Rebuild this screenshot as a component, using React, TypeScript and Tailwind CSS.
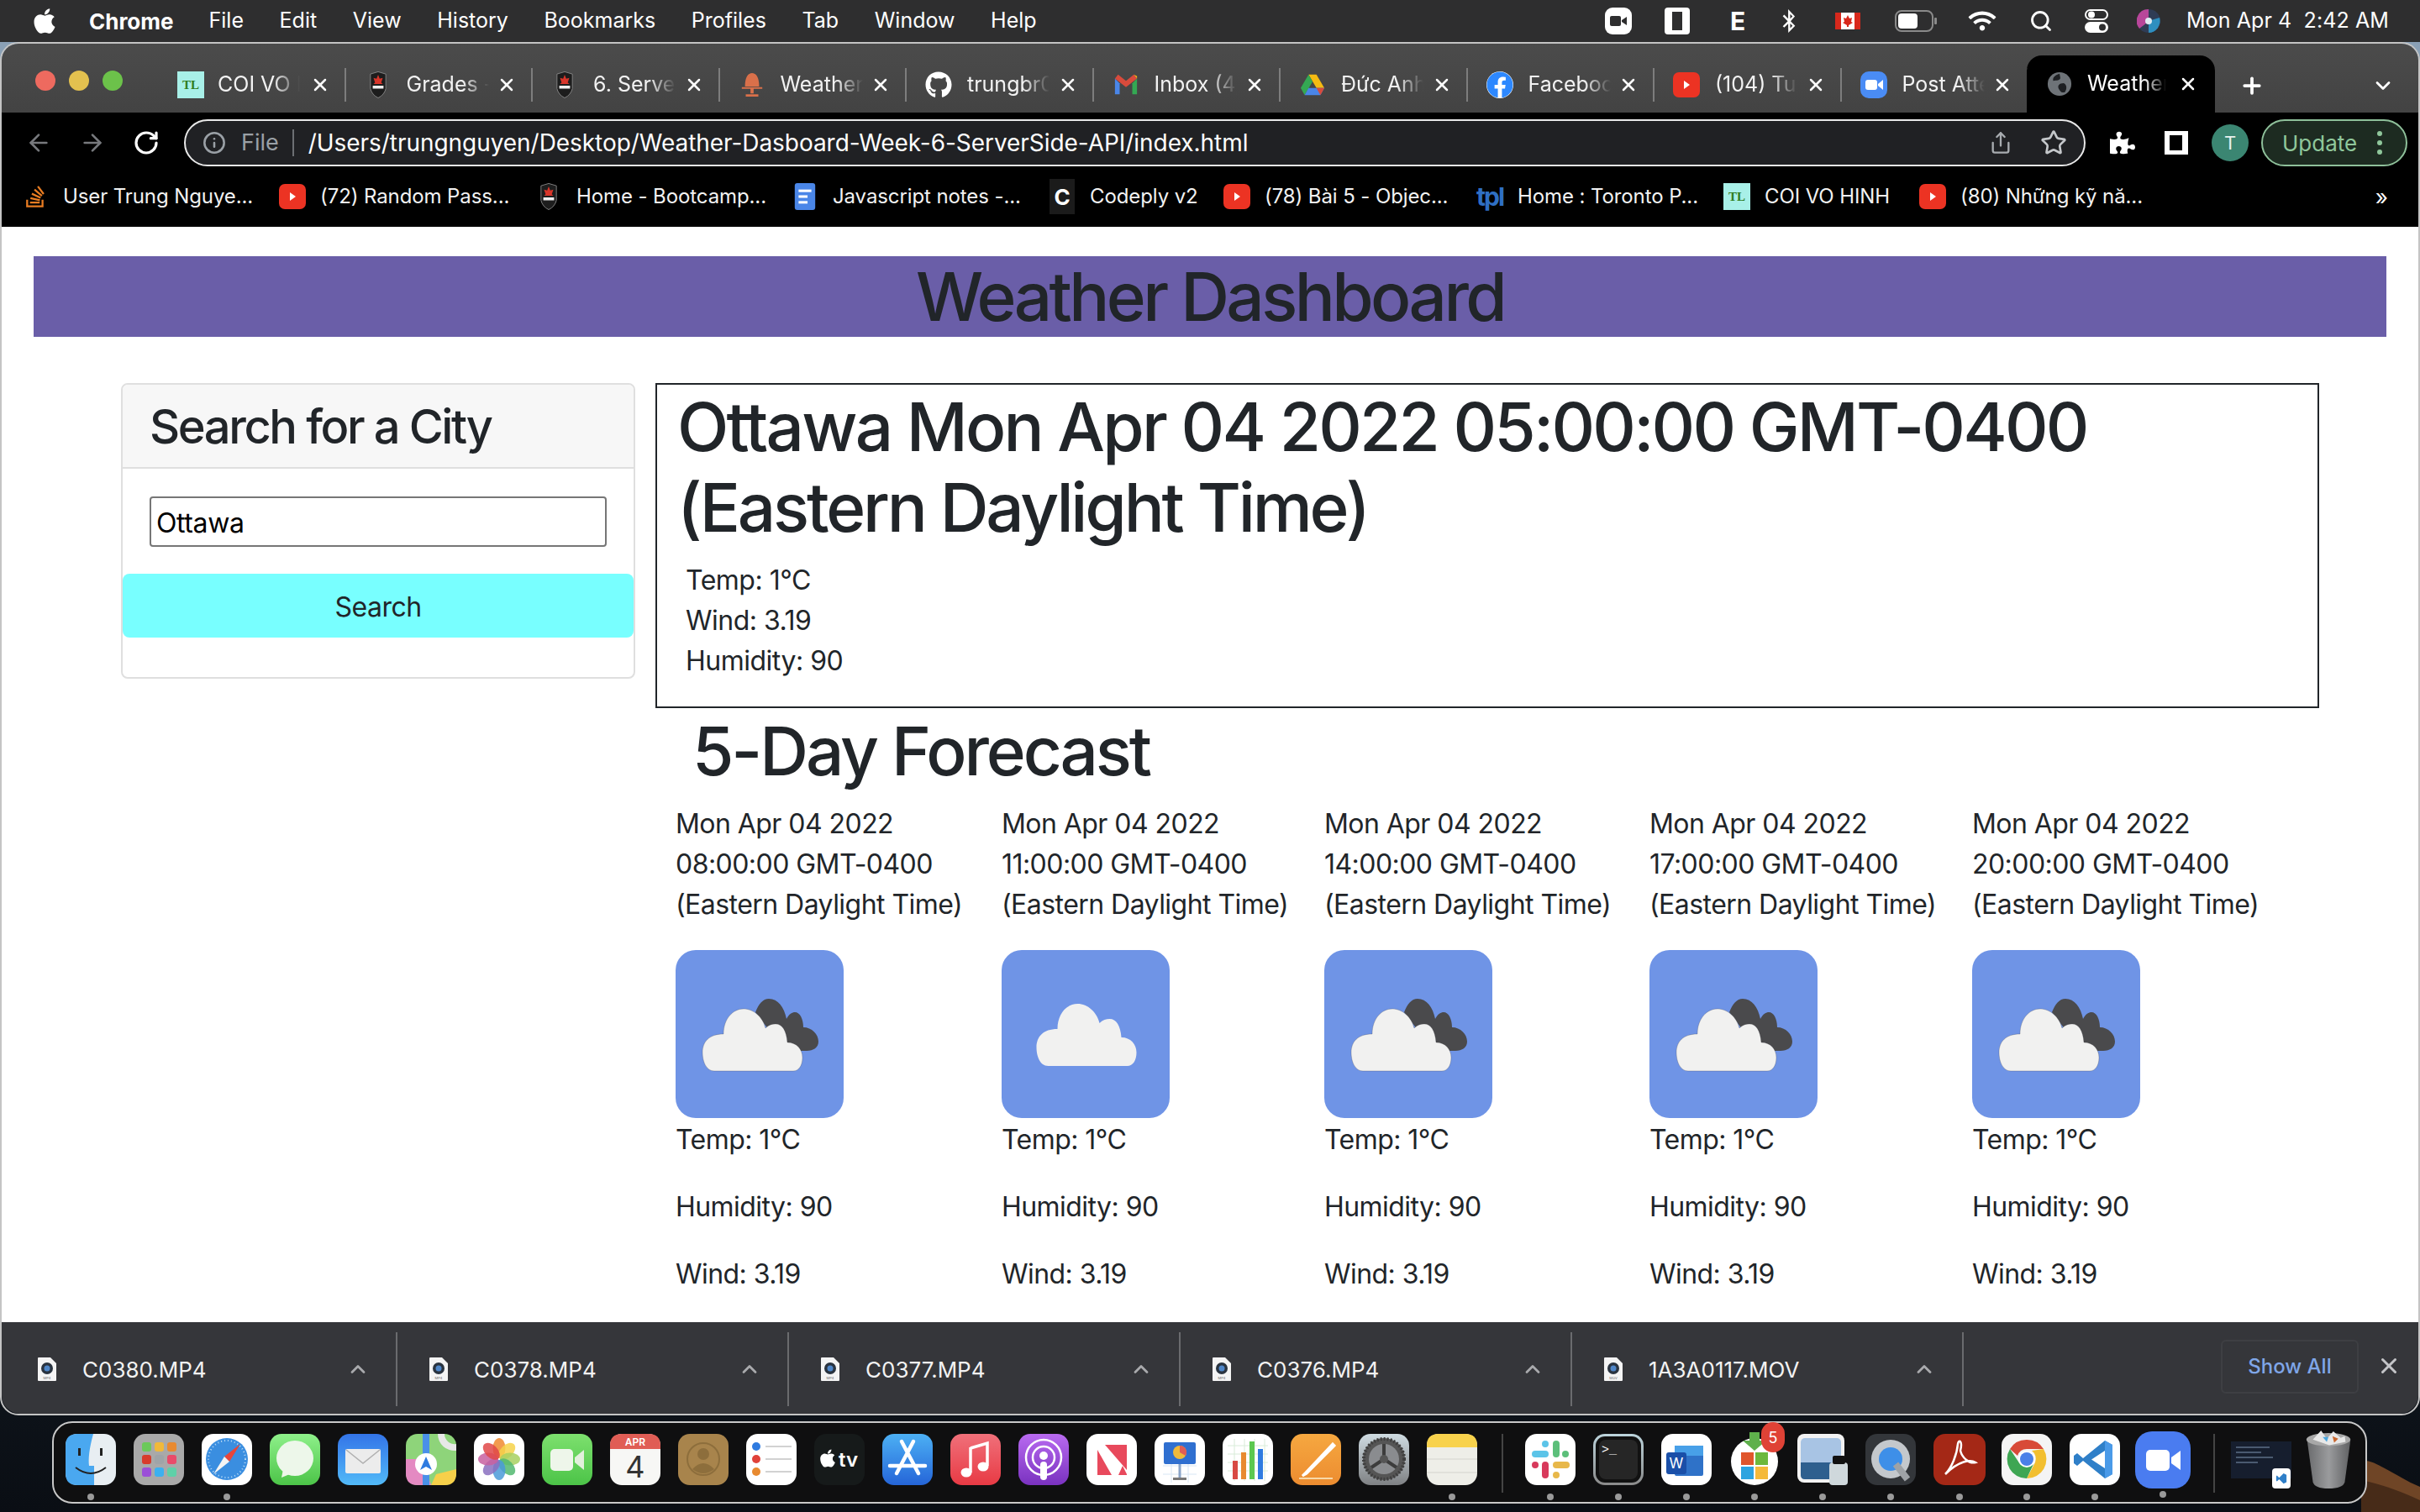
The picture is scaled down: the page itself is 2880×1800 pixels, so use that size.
import { ReactNode } from "react";
import { ArrowLeft, ArrowRight, ChevronDown, ChevronUp, Info, Plus, RotateCw, Search, Share, Star, X } from "lucide-react";
import { FaApple, FaBluetoothB, FaFacebook, FaGithub, FaPuzzlePiece, FaStackOverflow, FaWifi } from "react-icons/fa";

function TlIcon() {
  return (
    <div className="w-[32px] h-[32px] bg-[#a8f0e8] flex items-center justify-center text-[15px] font-bold text-[#2f7d1e] font-['Liberation_Serif',serif] shrink-0">
      TL
    </div>
  );
}

function Crest() {
  return (
    <svg viewBox="0 0 24 34" className="w-[22px] h-[32px] shrink-0">
      <path d="M2 3 L12 0 L22 3 L22 22 Q20 30 12 34 Q4 30 2 22 Z" fill="#1d1d1d" stroke="#888" strokeWidth="1" />
      <path d="M12 4 L14 9 L18 8 L16 14 L18 16 L6 16 L8 14 L6 8 L10 9 Z" fill="#d8352a" />
      <path d="M5 18 L19 18 L19 22 L5 22 Z" fill="#eee" />
    </svg>
  );
}

function Youtube() {
  return (
    <svg viewBox="0 0 32 32" className="w-[32px] h-[32px] shrink-0">
      <rect y="1" width="32" height="30" rx="7" fill="#ec3323" />
      <path d="M13 11 L20 16 L13 21 Z" fill="#fff" />
    </svg>
  );
}

function WeatherFav() {
  return (
    <svg viewBox="0 0 32 32" className="w-[30px] h-[32px] shrink-0">
      <path d="M7 18 C7 6 11 1 16 1 C21 1 25 6 25 18 Z" fill="#d9704a" />
      <path d="M3 19 H29 V21 H3 Z M14 21 H18 V27 H14 Z M8 28 H24 V31 H8 Z" fill="#d9704a" />
    </svg>
  );
}

function Gmail() {
  return (
    <svg viewBox="0 0 32 28" className="w-[30px] h-[28px] shrink-0">
      <path d="M2 6 V26 H8 V12 Z" fill="#4a86e8" />
      <path d="M24 12 V26 H30 V6 Z" fill="#34a853" />
      <path d="M2 6 L16 17 L30 6 L26 1 L16 9 L6 1 Z" fill="#d84b3c" />
      <path d="M26 1 L30 6 L30 3 Z" fill="#f5bb12" />
    </svg>
  );
}

function Drive() {
  return (
    <svg viewBox="0 0 32 28" className="w-[30px] h-[28px] shrink-0">
      <path d="M11 1 H21 L31 18 H21 Z" fill="#f5bb12" />
      <path d="M11 1 L1 18 L6 27 L16 10 Z" fill="#34a853" />
      <path d="M6 27 H26 L31 18 H11 Z" fill="#4a86e8" />
      <path d="M21 18 H31 L26 27 Z" fill="#d84b3c" />
    </svg>
  );
}

function ZoomFav() {
  return (
    <svg viewBox="0 0 32 32" className="w-[32px] h-[32px] shrink-0">
      <rect width="32" height="32" rx="10" fill="#4a8cf5" />
      <rect x="6" y="10" width="14" height="12" rx="3" fill="#fff" />
      <path d="M21 15 L27 10 V22 L21 17 Z" fill="#fff" />
    </svg>
  );
}

function Globe() {
  return (
    <svg viewBox="0 0 32 32" className="w-[30px] h-[32px] shrink-0">
      <circle cx="16" cy="16" r="15" fill="#6e7378" />
      <path d="M16 3 C10 5 7 8 8 12 C12 11 17 12 17 8 Z M21 15 C16 15 13 18 15 22 C17 26 20 28 23 26 C26 22 25 16 21 15 Z" fill="#1d1f22" />
    </svg>
  );
}

function DocFav() {
  return (
    <svg viewBox="0 0 32 42" className="w-[32px] h-[32px] shrink-0">
      <rect width="32" height="42" rx="4" fill="#4a86e8" />
      <rect x="6" y="10" width="20" height="4" fill="#fff" />
      <rect x="6" y="19" width="14" height="4" fill="#fff" />
      <rect x="6" y="28" width="14" height="4" fill="#fff" />
    </svg>
  );
}

const tabs: { icon: ReactNode; title: string }[] = [
  { icon: <TlIcon />, title: "COI VO H" },
  { icon: <Crest />, title: "Grades -" },
  { icon: <Crest />, title: "6. Server" },
  { icon: <WeatherFav />, title: "Weather" },
  { icon: <FaGithub className="w-[32px] h-[32px] text-white shrink-0" />, title: "trungbr0" },
  { icon: <Gmail />, title: "Inbox (4," },
  { icon: <Drive />, title: "Đức Anh" },
  { icon: <FaFacebook className="w-[32px] h-[32px] text-[#2d88ff] bg-white rounded-full shrink-0" />, title: "Facebook" },
  { icon: <Youtube />, title: "(104) Tu" },
  { icon: <ZoomFav />, title: "Post Atte" },
];

const bookmarks: { icon: ReactNode; title: string; width: string }[] = [
  { icon: <FaStackOverflow className="w-[22px] h-[34px] text-[#e87c22] shrink-0" />, title: "User Trung Nguye...", width: "w-[223px]" },
  { icon: <Youtube />, title: "(72) Random Pass...", width: "w-[222px]" },
  { icon: <Crest />, title: "Home - Bootcamp...", width: "w-[222px]" },
  { icon: <DocFav />, title: "Javascript notes -...", width: "w-[223px]" },
  {
    icon: (
      <div className="w-[30px] h-[42px] bg-[#1b1b1b] text-white text-[26px] font-bold flex items-center justify-center shrink-0">C</div>
    ),
    title: "Codeply v2",
    width: "w-[125px]",
  },
  { icon: <Youtube />, title: "(78) Bài 5 - Objec...", width: "w-[218px]" },
  {
    icon: <div className="w-[32px] text-[#2f6fc4] text-[30px] font-bold tracking-[-2px] leading-none shrink-0">tpl</div>,
    title: "Home : Toronto P...",
    width: "w-[211px]",
  },
  { icon: <TlIcon />, title: "COI VO HINH", width: "w-[150px]" },
  { icon: <Youtube />, title: "(80) Những kỹ nă...", width: "w-[216px]" },
];

const forecast = [
  { time: "08:00:00", dark: true, width: "w-[388px]" },
  { time: "11:00:00", dark: false, width: "w-[384px]" },
  { time: "14:00:00", dark: true, width: "w-[387px]" },
  { time: "17:00:00", dark: true, width: "w-[384px]" },
  { time: "20:00:00", dark: true, width: "w-[400px]" },
];

const downloads = ["C0380.MP4", "C0378.MP4", "C0377.MP4", "C0376.MP4", "1A3A0117.MOV"];

const cloudPath =
  "M46 144 C36 144 32 132 32 122 C32 109 40 100 57 100 C57 82 68 70 81 70 C93 70 104 80 107 93 C111 89 115 88 119 88 C127 88 132 96 133 110 C144 110 151 118 151 128 C151 137 147 144 140 144 Z";

function WeatherIcon({ dark }: { dark: boolean }) {
  return (
    <svg viewBox="0 0 200 200" className="w-[200px] h-[200px] block">
      <rect width="200" height="200" rx="24" fill="#6f94e6" />
      {dark ? (
        <>
          <path
            d="M95 74 C99 64 104 58 111 58 C122 58 129 68 132 82 C135 76 139 74 142 74 C148 74 152 82 152 92 C162 92 170 100 170 109 C170 116 164 120 156 120 L130 120 Z"
            fill="#4a4a4c"
          />
          <path d={cloudPath} fill="#f1f1f0" stroke="#33333a" strokeOpacity="0.25" strokeWidth="1" />
        </>
      ) : (
        <path d={cloudPath} fill="#f1f1f0" transform="translate(9.5 -6)" />
      )}
    </svg>
  );
}

function MenuBar() {
  const items = ["File", "Edit", "View", "History", "Bookmarks", "Profiles", "Tab", "Window", "Help"];
  return (
    <div className="h-[50px] bg-[#2e2e2f] flex items-center text-white text-[25px] shrink-0">
      <FaApple className="w-[30px] h-[34px] ml-[38px] mr-[38px] text-white" />
      <span className="font-bold text-[26px] mr-[42px]">Chrome</span>
      <div className="flex gap-[42.6px]">
        {items.map((m) => (
          <span key={m}>{m}</span>
        ))}
      </div>
      <div className="ml-auto flex items-center mr-[37px]">
        <svg viewBox="0 0 32 32" className="w-[32px] h-[32px]">
          <rect width="32" height="32" rx="9" fill="#fff" />
          <rect x="6" y="10" width="13" height="12" rx="2" fill="#2e2e2f" />
          <path d="M20 15 L26 11 V21 L20 17 Z" fill="#2e2e2f" />
        </svg>
        <svg viewBox="0 0 30 32" className="w-[30px] h-[32px] ml-[39px]">
          <rect width="30" height="32" rx="4" fill="#fff" />
          <rect x="9" y="5" width="12" height="22" fill="#2e2e2f" />
        </svg>
        <span className="ml-[48px] w-[17px] font-bold text-[30px] leading-none">E</span>
        <FaBluetoothB className="ml-[44px] w-[18px] h-[28px] text-white" />
        <svg viewBox="0 0 30 20" className="ml-[46px] w-[30px] h-[20px]">
          <rect width="30" height="20" fill="#fff" />
          <rect width="7" height="20" fill="#d8281c" />
          <rect x="23" width="7" height="20" fill="#d8281c" />
          <path d="M15 3 L17 7 L20 6 L19 11 L21 12 L16 15 V17 H14 V15 L9 12 L11 11 L10 6 L13 7 Z" fill="#d8281c" />
        </svg>
        <svg viewBox="0 0 50 26" className="ml-[41px] w-[50px] h-[26px]">
          <rect x="1" y="1" width="44" height="24" rx="7" fill="none" stroke="#8a8a8a" strokeWidth="2" />
          <rect x="4" y="4" width="23" height="18" rx="4" fill="#fff" />
          <rect x="47" y="9" width="3" height="8" rx="1" fill="#8a8a8a" />
        </svg>
        <FaWifi className="ml-[37px] w-[34px] h-[26px] text-white" />
        <Search className="ml-[39px] w-[28px] h-[30px] text-white" strokeWidth={2.4} />
        <svg viewBox="0 0 30 30" className="ml-[37px] w-[30px] h-[30px]">
          <rect x="2" y="2" width="26" height="11" rx="5.5" fill="none" stroke="#fff" strokeWidth="2" />
          <circle cx="9" cy="7.5" r="4" fill="#fff" />
          <rect x="1" y="16" width="28" height="13" rx="6.5" fill="#fff" />
          <circle cx="22" cy="22.5" r="4" fill="#2e2e2f" />
        </svg>
        <svg viewBox="0 0 28 28" className="ml-[33px] w-[28px] h-[28px]">
          <circle cx="14" cy="14" r="14" fill="#2f3c55" />
          <path d="M14 0 A14 14 0 0 0 3 23 Q10 18 14 14 Z" fill="#b8469a" />
          <path d="M14 28 A14 14 0 0 0 27 10 Q20 12 14 14 Z" fill="#2e8fc0" />
          <circle cx="14" cy="14" r="4" fill="#dfeaf2" />
        </svg>
        <span className="ml-[31px] whitespace-pre tracking-[0.1px]">Mon Apr 4  2:42 AM</span>
      </div>
    </div>
  );
}

function TabStrip() {
  return (
    <div className="h-[82px] bg-[linear-gradient(180deg,#4b4b4b,#434343)] flex items-stretch shrink-0 relative">
      <div className="w-[187px] flex items-center gap-[16px] pl-[40px] pt-[6px] shrink-0">
        <span className="w-[24px] h-[24px] rounded-full bg-[#ee6a5f]" />
        <span className="w-[24px] h-[24px] rounded-full bg-[#e3c14f]" />
        <span className="w-[24px] h-[24px] rounded-full bg-[#6cc24a]" />
      </div>
      {tabs.map((t, i) => (
        <div key={t.title} className="w-[222.5px] shrink-0 flex items-center pt-[16px] pl-[22px] first:pl-[21px] relative">
          <div className="w-[32px] flex justify-center shrink-0">{t.icon}</div>
          <span
            className={`${i === 0 ? "ml-[16px]" : "ml-[18px]"} w-[98px] overflow-hidden whitespace-nowrap text-[25px] text-[#f2f2f2] [mask-image:linear-gradient(90deg,#000_68%,transparent)]`}
          >
            {t.title}
          </span>
          <X className="w-[24px] h-[24px] ml-auto mr-[19px] text-white shrink-0" strokeWidth={2.5} />
          <span className="absolute right-0 top-[29px] h-[40px] w-[2px] bg-[#7d7d7d]" />
        </div>
      ))}
      <div className="w-[224px] ml-[-2px] shrink-0 mt-[14px] bg-black rounded-t-[18px] flex items-center pl-[24px] relative">
        <Globe />
        <span className="ml-[18px] w-[94px] overflow-hidden whitespace-nowrap text-[25px] text-white [mask-image:linear-gradient(90deg,#000_72%,transparent)]">
          Weather
        </span>
        <X className="w-[24px] h-[24px] ml-[14px] text-white shrink-0" strokeWidth={2.5} />
      </div>
      <Plus className="w-[30px] h-[30px] ml-[29px] self-center mt-[18px] text-white" strokeWidth={3} />
      <ChevronDown className="w-[28px] h-[28px] ml-[127px] self-center mt-[18px] text-white" strokeWidth={2.4} />
    </div>
  );
}

function Toolbar() {
  return (
    <div className="h-[72px] bg-black flex items-center shrink-0 pl-[28px]">
      <ArrowLeft className="w-[32px] h-[32px] text-[#77797d]" strokeWidth={2} />
      <ArrowRight className="w-[32px] h-[32px] ml-[32px] text-[#77797d]" strokeWidth={2} />
      <RotateCw className="w-[32px] h-[32px] ml-[32px] text-white" strokeWidth={2.4} />
      <div className="ml-[29px] w-[2263px] h-[56px] rounded-full border-2 border-[#e8e8e8] bg-[#202124] flex items-center pl-[20px] shrink-0">
        <Info className="w-[28px] h-[28px] text-[#9aa0a6]" strokeWidth={2.2} />
        <span className="ml-[18px] text-[27px] text-[#9aa0a6]">File</span>
        <span className="ml-[16px] w-[2px] h-[32px] bg-[#6c6f73]" />
        <span className="ml-[17px] text-[28px] tracking-[-0.05px] text-white whitespace-nowrap">/Users/trungnguyen/Desktop/Weather-Dasboard-Week-6-ServerSide-API/index.html</span>
        <Share className="w-[28px] h-[32px] ml-auto text-[#a8acb0]" strokeWidth={2} />
        <Star className="w-[32px] h-[32px] ml-[33px] mr-[20px] text-[#c4c7ca]" strokeWidth={2} />
      </div>
      <FaPuzzlePiece className="w-[30px] h-[30px] ml-[29px] text-white" />
      <svg viewBox="0 0 28 28" className="ml-[35px] w-[28px] h-[28px]">
        <rect width="28" height="28" fill="#fff" />
        <rect x="6" y="5" width="15" height="18" fill="#000" />
      </svg>
      <div className="ml-[28px] w-[44px] h-[44px] rounded-full bg-[#3b8672] flex items-center justify-center text-[22px] text-[#e8f2ef]">T</div>
      <div className="ml-[15px] w-[174px] h-[56px] rounded-full border-2 border-[#8ec09a] bg-[#1d2b21] flex items-center pl-[23px] text-[26px] text-[#8fc79b]">
        Update
        <span className="ml-[24px] flex flex-col gap-[5px]">
          <span className="w-[6px] h-[6px] rounded-full bg-[#8fc79b]" />
          <span className="w-[6px] h-[6px] rounded-full bg-[#8fc79b]" />
          <span className="w-[6px] h-[6px] rounded-full bg-[#8fc79b]" />
        </span>
      </div>
    </div>
  );
}

function Bookmarks() {
  return (
    <div className="h-[64px] bg-black flex items-center gap-[34px] pl-[24px] pb-[8px] shrink-0 relative">
      {bookmarks.map((b) => (
        <div key={b.title} className="flex items-center gap-[17px]">
          <div className="w-[32px] flex justify-center shrink-0">{b.icon}</div>
          <span className={`${b.width} text-[24px] tracking-[-0.1px] text-[#f2f2f2] whitespace-nowrap`}>{b.title}</span>
        </div>
      ))}
      <span className="absolute right-[36px] text-[26px] text-white">»</span>
    </div>
  );
}

function Page() {
  return (
    <div className="flex-1 bg-white text-[#212529] overflow-hidden">
      <h1 className="mt-[35px] mx-[38px] h-[96px] bg-[#6a5ea8] text-center text-[80px] leading-[96px] font-medium tracking-[-3.6px]">
        Weather Dashboard
      </h1>
      <div className="flex mt-[55px] ml-[142px]">
        <div className="w-[612px] h-[352px] border-2 border-[#dfdfdf] rounded-[8px] shrink-0 overflow-hidden">
          <div className="h-[100px] bg-[#f7f7f7] border-b-2 border-[#dfdfdf] flex items-center pl-[32px] pt-[2px] text-[56px] font-medium tracking-[-2.4px]">
            Search for a City
          </div>
          <div className="px-[32px] pt-[33px]">
            <div className="h-[60px] border-2 border-[#767676] rounded-[4px] flex items-center pl-[6px] pt-[3px] text-[32px] text-black tracking-[-0.4px]">
              Ottawa
            </div>
          </div>
          <div className="mt-[32px] h-[76px] bg-[#78ffff] rounded-[8px] flex items-center justify-center pt-[3px] text-[32px] tracking-[-0.5px]">
            Search
          </div>
        </div>
        <div className="ml-[24px] w-[1980px] shrink-0">
          <div className="h-[387px] border-2 border-[#212529] pl-[24px] pt-[2px]">
            <h2 className="text-[80px] leading-[96px] font-medium">
              <div className="tracking-[-2.8px]">Ottawa Mon Apr 04 2022 05:00:00 GMT-0400</div>
              <div className="tracking-[-3.2px]">(Eastern Daylight Time)</div>
            </h2>
            <div className="mt-[15px] pl-[10px] text-[32px] leading-[48px] tracking-[-0.5px]">
              <div>Temp: 1°C</div>
              <div>Wind: 3.19</div>
              <div>Humidity: 90</div>
            </div>
          </div>
          <h2 className="ml-[44px] mt-[3px] text-[80px] leading-[96px] font-medium tracking-[-3.1px]">5-Day Forecast</h2>
          <div className="flex ml-[24px] mt-[15px] text-[32px] leading-[48px] tracking-[-0.55px]">
            {forecast.map((f) => (
              <div key={f.time} className={`${f.width} shrink-0`}>
                <div>Mon Apr 04 2022</div>
                <div>{f.time} GMT-0400</div>
                <div className="whitespace-nowrap">(Eastern Daylight Time)</div>
                <div className="mt-[30px]">
                  <WeatherIcon dark={f.dark} />
                </div>
                <div className="mb-[32px] pt-[2px]">Temp: 1°C</div>
                <div className="mb-[32px]">Humidity: 90</div>
                <div>Wind: 3.19</div>
              </div>
            ))}
          </div>
        </div>
      </div>
    </div>
  );
}

function FileIcon({ label }: { label: string }) {
  return (
    <svg viewBox="0 0 22 28" className="w-[22px] h-[28px] shrink-0">
      <path d="M0 1 Q0 0 1 0 L15 0 L22 7 V27 Q22 28 21 28 H1 Q0 28 0 27 Z" fill="#f4f4f4" />
      <circle cx="11" cy="13" r="7" fill="#2a3440" />
      <circle cx="11" cy="13" r="3.5" fill="#4f86c8" />
      <text x="11" y="26" fontSize="4" textAnchor="middle" fill="#666">{label}</text>
    </svg>
  );
}

function DownloadBar() {
  return (
    <div className="h-[109px] bg-[#35363a] flex items-center shrink-0 rounded-b-[22px] relative">
      {downloads.map((d) => (
        <div key={d} className="w-[466px] first:w-[471px] h-[88px] mt-[3px] shrink-0 border-r-2 border-[#6a6b6e] flex items-center pl-[38px] first:pl-[43px]">
          <FileIcon label={d.endsWith("MOV") ? "MOV" : "MP4"} />
          <span className="ml-[31px] text-[26px] text-[#f2f2f2]">{d}</span>
          <ChevronUp className="ml-auto mr-[31px] w-[28px] h-[28px] text-[#a9aaad]" strokeWidth={2.4} />
        </div>
      ))}
      <div className="ml-auto mr-[71px] mb-[4px] w-[164px] h-[64px] rounded-[6px] border-2 border-[#3e3f43] flex items-center justify-center text-[24px] font-medium text-[#7fa6e8]">
        Show All
      </div>
      <X className="absolute right-[20px] top-[37px] w-[30px] h-[30px] text-[#c4c5c8]" strokeWidth={2.4} />
    </div>
  );
}

function Tile({ children, bg = "#fff", grad }: { children?: ReactNode; bg?: string; grad?: [string, string] }) {
  const id = grad ? `g${grad[0].slice(1)}${grad[1].slice(1)}` : "";
  return (
    <svg viewBox="0 0 60 61" className="w-[60px] h-[61px] shrink-0">
      {grad && (
        <defs>
          <linearGradient id={id} x1="0" y1="0" x2="0" y2="1">
            <stop offset="0" stopColor={grad[0]} />
            <stop offset="1" stopColor={grad[1]} />
          </linearGradient>
        </defs>
      )}
      <rect width="60" height="61" rx="14" fill={grad ? `url(#${id})` : bg} />
      {children}
    </svg>
  );
}

function DockSlot({ children, dot, className = "w-[60px]" }: { children: ReactNode; dot?: boolean; className?: string }) {
  return (
    <div className={`${className} h-[61px] relative shrink-0 flex justify-center`}>
      {children}
      {dot && <span className="absolute left-1/2 -translate-x-1/2 top-[71px] w-[8px] h-[8px] rounded-full bg-[#9a9a9a]" />}
    </div>
  );
}

function Dock() {
  return (
    <div className="ml-[62px] mt-[7px] w-[2755px] h-[98px] shrink-0 rounded-[24px] border-2 border-[#c8c8c8] bg-[#0f0f10] flex items-start pl-[14px] pt-[13px] gap-[21px] relative">
      <DockSlot dot>
        <Tile bg="#e8eef2">
          <path d="M14 0 H33 C28 18 27 30 28 38 H34 V61 H14 Q0 61 0 47 V14 Q0 0 14 0 Z" fill="#4aa8f0" />
          <rect x="15" y="17" width="3" height="9" fill="#222" />
          <rect x="41" y="17" width="3" height="9" fill="#222" />
          <path d="M12 40 Q30 54 48 40" stroke="#222" strokeWidth="2" fill="none" />
        </Tile>
      </DockSlot>
      <DockSlot>
        <Tile bg="#a9a9a9">
          {[["#6cc95a", 10], ["#f0b93a", 25], ["#e88a30", 40]].map(([c, x]) => (
            <rect key={String(c)} x={x as number} y="10" width="11" height="11" rx="3" fill={c as string} />
          ))}
          {[["#d83b2c", 10], ["#9fa4a8", 25], ["#e94b6a", 40]].map(([c, x]) => (
            <rect key={String(c)} x={x as number} y="25" width="11" height="11" rx="3" fill={c as string} />
          ))}
          {[["#9b4fd8", 10], ["#3cb0f0", 25], ["#5fd0a8", 40]].map(([c, x]) => (
            <rect key={String(c)} x={x as number} y="40" width="11" height="11" rx="3" fill={c as string} />
          ))}
        </Tile>
      </DockSlot>
      <DockSlot dot>
        <Tile>
          <circle cx="30" cy="30" r="25" fill="#3a8ee0" />
          <circle cx="30" cy="30" r="22" fill="none" stroke="#bcdcf5" strokeWidth="2" strokeDasharray="1 3" />
          <path d="M46 12 L33 33 L27 27 Z" fill="#e8453a" />
          <path d="M14 48 L33 33 L27 27 Z" fill="#f4f4f4" />
        </Tile>
      </DockSlot>
      <DockSlot>
        <Tile grad={["#8ef08a", "#4cc448"]}>
          <ellipse cx="30" cy="29" rx="22" ry="21" fill="#edf7ea" />
          <path d="M16 42 L14 52 L26 47 Z" fill="#edf7ea" />
        </Tile>
      </DockSlot>
      <DockSlot>
        <Tile grad={["#3374e8", "#52baf8"]}>
          <rect x="9" y="18" width="42" height="29" rx="2" fill="#ececec" />
          <path d="M10 19 L30 35 L50 19" fill="none" stroke="#b0b0b0" strokeWidth="1.5" />
        </Tile>
      </DockSlot>
      <DockSlot>
        <Tile bg="#8ed47a">
          <path d="M0 30 L0 47 Q0 61 14 61 H30 L20 30 Z" fill="#e48ac2" />
          <path d="M36 48 L30 61 H46 Q60 61 60 47 V42 Z" fill="#f6d04a" />
          <path d="M20 0 H28 V61 H20 Z" fill="#4a90e8" />
          <path d="M38 0 A20 20 0 0 0 60 20 V12 A12 12 0 0 1 46 0 Z" fill="#e8e8e8" />
          <circle cx="24" cy="36" r="13" fill="#fff" />
          <path d="M24 27 L31 43 L24 39 L17 43 Z" fill="#2f7be0" />
        </Tile>
      </DockSlot>
      <DockSlot>
        <Tile>
          {[["#f08a30", 0], ["#f6d24a", 45], ["#a8d060", 90], ["#52b870", 135], ["#4a9ad8", 180], ["#8a70c0", 225], ["#c860a0", 270], ["#e04848", 315]].map(
            ([c, a]) => (
              <ellipse key={String(a)} cx="30" cy="17" rx="7.5" ry="12" fill={c as string} fillOpacity="0.85" transform={`rotate(${a} 30 30)`} />
            ),
          )}
        </Tile>
      </DockSlot>
      <DockSlot>
        <Tile grad={["#7de06e", "#4cc448"]}>
          <rect x="10" y="18" width="27" height="26" rx="5" fill="#eef6ea" />
          <path d="M39 28 L50 19 V43 L39 34 Z" fill="#e2f0dc" />
        </Tile>
      </DockSlot>
      <DockSlot>
        <Tile bg="#f7f7f5">
          <path d="M0 18 V14 Q0 0 14 0 H46 Q60 0 60 14 V18 Z" fill="#e05d55" />
          <text x="30" y="14" textAnchor="middle" fontSize="12" fontWeight="600" fill="#fff">APR</text>
          <text x="30" y="52" textAnchor="middle" fontSize="36" fill="#333">4</text>
        </Tile>
      </DockSlot>
      <DockSlot>
        <Tile bg="#a8844c">
          <circle cx="30" cy="30" r="19" fill="none" stroke="#8d6e3c" strokeWidth="2" />
          <circle cx="30" cy="24" r="7" fill="#8d6e3c" />
          <path d="M17 42 Q30 28 43 42 Q30 52 17 42 Z" fill="#8d6e3c" />
        </Tile>
      </DockSlot>
      <DockSlot>
        <Tile>
          <circle cx="12" cy="15" r="5" fill="#2f7be0" />
          <circle cx="12" cy="30" r="5" fill="#e0423a" />
          <circle cx="12" cy="45" r="5" fill="#e88a30" />
          <path d="M23 15 H54 M23 30 H54 M23 45 H54" stroke="#c4c4c4" strokeWidth="1.5" />
        </Tile>
      </DockSlot>
      <DockSlot>
        <Tile bg="#161a1a">
          <FaApple x="4" y="17" size="24" color="#fff" />
          <text x="29" y="39" fontSize="24" fontWeight="600" fill="#fff">tv</text>
        </Tile>
      </DockSlot>
      <DockSlot>
        <Tile grad={["#4cb0f4", "#2565d8"]}>
          <path d="M37 9 L17 47 M23 9 L43 47 M9 38 H51" stroke="#fff" strokeWidth="4.5" strokeLinecap="round" />
        </Tile>
      </DockSlot>
      <DockSlot>
        <Tile grad={["#f0707a", "#e83a44"]}>
          <path d="M24 17 L44 11 V38" stroke="#fff" strokeWidth="3.5" fill="none" />
          <path d="M24 16 V46" stroke="#fff" strokeWidth="3.5" />
          <ellipse cx="19" cy="46" rx="6.5" ry="5.5" fill="#fff" />
          <ellipse cx="39" cy="39" rx="6.5" ry="5.5" fill="#fff" />
        </Tile>
      </DockSlot>
      <DockSlot>
        <Tile grad={["#b86af0", "#7a32c0"]}>
          <circle cx="30" cy="28" r="21" fill="none" stroke="#fff" strokeWidth="2.5" />
          <circle cx="30" cy="28" r="13" fill="none" stroke="#fff" strokeWidth="2.5" />
          <circle cx="30" cy="26" r="5" fill="#fff" />
          <rect x="26" y="33" width="8" height="22" rx="4" fill="#fff" />
        </Tile>
      </DockSlot>
      <DockSlot>
        <Tile>
          <path d="M13 19 V49 H30 Z" fill="#e8495c" />
          <path d="M22 13 H48 V43 Z" fill="#e8495c" />
          <path d="M38 49 H48 V48 L43 38 Z" fill="#e8495c" />
        </Tile>
      </DockSlot>
      <DockSlot>
        <Tile>
          <path d="M10 38 H50 M10 48 H50 M20 36 V58 M40 36 V58" stroke="#d8e6f4" strokeWidth="1" />
          <rect x="11" y="10" width="38" height="26" rx="2" fill="#2f6fd0" />
          <circle cx="30" cy="22" r="8" fill="#f0b93a" />
          <path d="M30 22 V14 A8 8 0 0 1 37 26 Z" fill="#e05d55" />
          <rect x="28.5" y="36" width="3" height="18" fill="#8aa4c8" />
          <rect x="22" y="52" width="16" height="3" fill="#777" />
        </Tile>
      </DockSlot>
      <DockSlot>
        <Tile>
          <path d="M6 14 H54 M6 24 H54 M6 34 H54 M6 44 H54 M14 6 V56 M26 6 V56 M38 6 V56 M50 6 V56" stroke="#d8ecd8" strokeWidth="1" />
          <rect x="12" y="32" width="6" height="22" fill="#d84a44" />
          <rect x="22" y="22" width="6" height="32" fill="#e88a30" />
          <rect x="32" y="9" width="6" height="45" fill="#5cc850" />
          <rect x="42" y="18" width="6" height="36" fill="#2f7be0" />
        </Tile>
      </DockSlot>
      <DockSlot>
        <Tile grad={["#f6a840", "#ec8c30"]}>
          <path d="M50 12 L18 46 L14 50 L19 47 L52 14 Z" fill="#fff" stroke="#fff" strokeWidth="3" />
          <rect x="10" y="52" width="40" height="2" fill="#f8d8a8" />
        </Tile>
      </DockSlot>
      <DockSlot>
        <Tile grad={["#cfdce2", "#7f8184"]}>
          <circle cx="30" cy="30" r="25" fill="#555" />
          <circle cx="30" cy="30" r="24" fill="none" stroke="#3e3e3e" strokeWidth="4" strokeDasharray="2 2" />
          <circle cx="30" cy="30" r="18" fill="#8a8c8f" />
          <path d="M30 30 V12 M30 30 L15 40 M30 30 L45 40" stroke="#3c3c3c" strokeWidth="4" />
          <circle cx="30" cy="30" r="5" fill="#555" />
        </Tile>
      </DockSlot>
      <DockSlot dot>
        <Tile bg="#eeeee8">
          <path d="M0 16 V14 Q0 0 14 0 H46 Q60 0 60 14 V16 Z" fill="#f8d24c" />
          <path d="M0 30 H60 M0 46 H60" stroke="#d4d4ce" strokeWidth="1" />
        </Tile>
      </DockSlot>
      <span className="w-[2px] h-[70px] bg-[#444] ml-[8px] mr-[5px] shrink-0" />
      <DockSlot dot>
        <Tile>
          <rect x="33" y="8" width="8" height="20" rx="4" fill="#5cbf7a" />
          <rect x="44" y="20" width="8" height="8" rx="4" fill="#5cbf7a" />
          <rect x="8" y="20" width="20" height="8" rx="4" fill="#5cc4e8" />
          <rect x="20" y="8" width="8" height="8" rx="4" fill="#5cc4e8" />
          <rect x="20" y="33" width="8" height="20" rx="4" fill="#d83a5c" />
          <rect x="8" y="33" width="8" height="8" rx="4" fill="#d83a5c" />
          <rect x="33" y="33" width="20" height="8" rx="4" fill="#e8b84a" />
          <rect x="33" y="45" width="8" height="8" rx="4" fill="#e8b84a" />
        </Tile>
      </DockSlot>
      <DockSlot dot>
        <Tile grad={["#bcd4dc", "#8a8a8a"]}>
          <rect x="3" y="3" width="54" height="55" rx="11" fill="#111" />
          <rect x="7" y="7" width="46" height="47" rx="8" fill="#262626" />
          <text x="10" y="23" fontSize="15" fill="#fff" fontFamily="Liberation Mono, monospace">{">_"}</text>
        </Tile>
      </DockSlot>
      <DockSlot dot>
        <Tile>
          <rect x="16" y="14" width="34" height="36" rx="2" fill="#2f72c8" />
          <rect x="16" y="14" width="34" height="12" fill="#48a0e8" />
          <rect x="6" y="22" width="24" height="26" rx="3" fill="#1a4fa8" />
          <text x="18" y="41" textAnchor="middle" fontSize="17" fill="#fff">W</text>
        </Tile>
      </DockSlot>
      <DockSlot dot>
        <svg viewBox="0 0 60 61" className="w-[60px] h-[61px] overflow-visible">
          <circle cx="30" cy="33" r="28" fill="#fff" />
          <rect x="14" y="22" width="15" height="15" fill="#e0562c" />
          <rect x="31" y="22" width="15" height="15" fill="#6cb83c" />
          <rect x="14" y="39" width="15" height="15" fill="#2ea4e0" />
          <rect x="31" y="39" width="15" height="15" fill="#f4b93a" />
          <path d="M24 -2 H36 V8 H44 L30 20 L16 8 H24 Z" fill="#5fb04c" />
        </svg>
        <span className="absolute left-[38px] top-[-14px] w-[28px] h-[36px] rounded-full bg-[#df4236] text-white text-[18px] flex items-center justify-center">5</span>
      </DockSlot>
      <DockSlot dot>
        <svg viewBox="0 0 60 61" className="w-[60px] h-[61px]">
          <rect width="56" height="58" rx="8" fill="#f2f2f2" />
          <rect x="4" y="5" width="48" height="49" rx="5" fill="#a8c4e4" />
          <path d="M4 34 H52 V49 Q52 54 47 54 H9 Q4 54 4 49 Z" fill="#2e5f8e" />
          <rect x="38" y="34" width="22" height="27" rx="4" fill="#cfd8dc" />
          <rect x="42" y="26" width="15" height="10" rx="2" fill="#111" />
        </svg>
      </DockSlot>
      <DockSlot dot>
        <Tile bg="#33363a">
          <circle cx="30" cy="30" r="23" fill="#c4c8cc" />
          <circle cx="30" cy="30" r="14" fill="#3e8fe8" />
          <path d="M36 36 L50 54" stroke="#9ea2a6" strokeWidth="8" />
        </Tile>
      </DockSlot>
      <DockSlot dot className="w-[62px] -mr-[2px]">
        <svg viewBox="0 0 62 61" className="w-[62px] h-[61px]">
          <rect width="62" height="61" rx="14" fill="#a42816" />
          <path d="M14 48 C22 40 28 24 29 12 C30 6 35 8 32 20 C34 28 42 36 50 34 C44 30 30 32 14 48 Z" fill="none" stroke="#fff" strokeWidth="2.5" />
        </svg>
      </DockSlot>
      <DockSlot dot>
        <Tile bg="#f4f4f4">
          <path d="M30 7 A23 23 0 0 1 50 18 L30 18 A12 12 0 0 0 19 26 L10 18 A23 23 0 0 1 30 7 Z" fill="#d84a38" />
          <path d="M50 18 A23 23 0 0 1 30 53 L40 34 A12 12 0 0 0 36 20 Z" fill="#f2bf30" />
          <path d="M10 18 L22 36 A12 12 0 0 0 38 36 L30 53 A23 23 0 0 1 10 18 Z" fill="#3ea653" />
          <circle cx="30" cy="30" r="10" fill="#fff" />
          <circle cx="30" cy="30" r="8" fill="#4a80e8" />
        </Tile>
      </DockSlot>
      <DockSlot dot className="w-[60px] -mr-[3px]">
        <Tile>
          <path d="M42 8 L51 13 V48 L42 53 L16 32 L9 38 L5 35 V26 L9 23 L16 29 Z" fill="#2f7fc8" />
          <path d="M42 8 L51 13 V48 L42 53 V38 V22 Z" fill="#4a9ae8" />
          <path d="M42 20 L26 30.5 L42 41 Z" fill="#fff" />
        </Tile>
      </DockSlot>
      <DockSlot dot className="w-[66px] -translate-y-[3px]">
        <svg viewBox="0 0 66 68" className="w-[66px] h-[68px]">
          <rect width="66" height="68" rx="20" fill="#4a7cf0" />
          <rect x="13" y="22" width="28" height="25" rx="5" fill="#fff" />
          <path d="M43 31 L54 23 V46 L43 38 Z" fill="#fff" />
        </svg>
      </DockSlot>
      <span className="w-[2px] h-[70px] bg-[#444] ml-[6px] shrink-0" />
      <div className="w-[72px] h-[44px] mt-[9px] bg-[#161e2e] relative shrink-0 ml-[-2px] flex flex-col gap-[4px] p-[6px]">
        <span className="w-[40px] h-[2px] bg-[#4a5a70]" />
        <span className="w-[30px] h-[2px] bg-[#4a5a70]" />
        <span className="w-[44px] h-[2px] bg-[#4a5a70]" />
        <span className="w-[26px] h-[2px] bg-[#4a5a70]" />
        <div className="absolute right-[1px] bottom-[-12px] w-[22px] h-[24px] rounded-[4px] bg-white flex items-center justify-center">
          <svg viewBox="0 0 16 16" className="w-[14px] h-[14px]">
            <path d="M11 1 L15 3 V13 L11 15 L5 9 L2 12 L1 11 V5 L2 4 L5 7 Z" fill="#2f7fc8" />
          </svg>
        </div>
      </div>
      <svg viewBox="0 0 55 72" className="w-[55px] h-[70px] -mt-[5px] ml-[-4px] shrink-0">
        <defs>
          <linearGradient id="trash" x1="0" y1="0" x2="1" y2="0">
            <stop offset="0" stopColor="#6a6b6d" />
            <stop offset="0.5" stopColor="#9a9b9d" />
            <stop offset="1" stopColor="#5f6062" />
          </linearGradient>
        </defs>
        <path d="M1 13 L8 64 Q10 72 27 72 Q45 72 47 64 L54 13 Z" fill="url(#trash)" />
        <ellipse cx="27" cy="12" rx="27" ry="8" fill="#a8a8a8" />
        <path d="M8 12 L18 1 L25 11 L33 2 L42 10 L47 8 L48 15 L28 19 Z" fill="#e8e8e8" />
        <path d="M20 9 L27 9 L25 15 Z" fill="#4aa8e0" />
        <path d="M32 8 L39 11 L34 16 Z" fill="#c8662e" />
      </svg>
    </div>
  );
}

export default function App() {
  return (
    <div className="relative w-[2880px] h-[1800px] overflow-hidden flex flex-col font-['Inter',sans-serif] bg-[linear-gradient(180deg,#8aa0b5_0,#8aa0b5_120px,#111820_1500px,#0a0e14_1800px)]">
      <svg viewBox="0 0 70 70" className="absolute right-0 bottom-0 w-[70px] h-[70px]">
        <path d="M0 9 C10 8 18 13 28 18 C40 24 55 34 70 40 V70 H0 Z" fill="#6f4526" />
        <path d="M0 32 C18 36 40 42 70 56 V70 H0 Z" fill="#472b18" />
      </svg>
      <MenuBar />
      <div className="h-[1635px] shrink-0 flex flex-col border-2 border-[#c4c4c4] rounded-[22px] overflow-hidden relative">
        <TabStrip />
        <Toolbar />
        <Bookmarks />
        <Page />
        <DownloadBar />
      </div>
      <Dock />
    </div>
  );
}
